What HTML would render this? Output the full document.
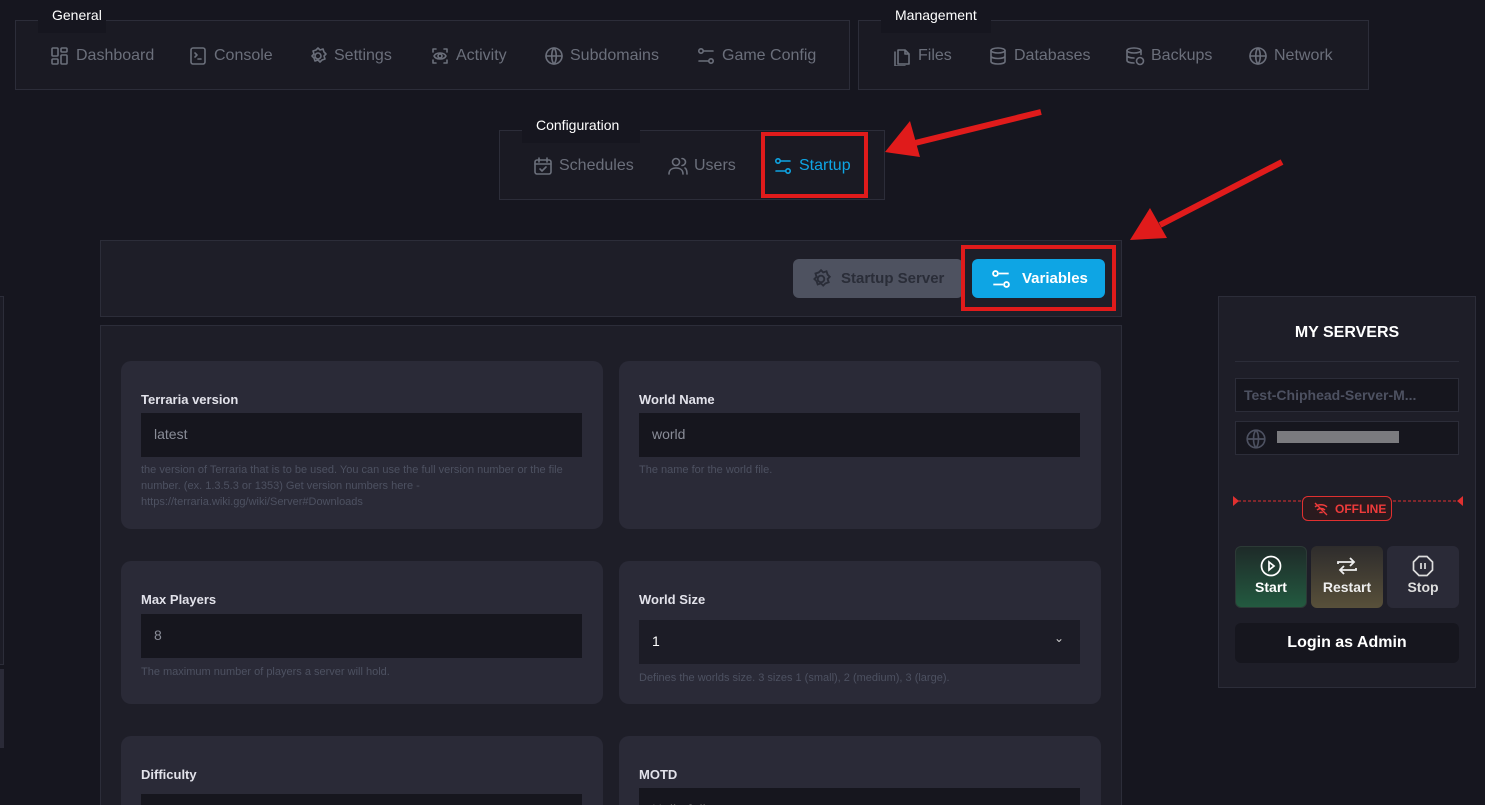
<!DOCTYPE html>
<html><head><meta charset="utf-8"><style>
*{box-sizing:border-box;margin:0;padding:0}
html,body{width:1485px;height:805px;overflow:hidden}
body{background:#16161f;font-family:"Liberation Sans",sans-serif;position:relative;color:#6b6f7b}
.a{position:absolute}
.box{position:absolute;border:1px solid #2c2d39;background:#1a1a23}
.tab{position:absolute;background:#16161f;color:#fff;font-size:14px;padding:7px 0 0 14px}
.nav{position:absolute;top:0;display:flex;align-items:center;gap:6px;font-size:16px;color:#6b6f7b}
.nav svg{width:20px;height:20px;fill:none;stroke:#6b6f7b;stroke-width:1.6;stroke-linecap:round;stroke-linejoin:round}
.panel{position:absolute;background:#1e1e28;border:1px solid #2c2d39}
.card{position:absolute;background:#2a2a37;border-radius:10px;width:482px}
.lbl{position:absolute;left:20px;font-size:13px;font-weight:bold;color:#e2e2ea}
.inp{position:absolute;left:20px;width:441px;height:44px;background:#16161e;color:#8a8d98;font-size:14px;padding:13px 13px}
.help{position:absolute;left:20px;width:450px;font-size:11px;line-height:16px;color:#4d5161}
.btn{position:absolute;border-radius:6px;font-weight:bold;font-size:16px;display:flex;align-items:center}
</style></head><body>

<div class="box" style="left:15px;top:20px;width:835px;height:70px"></div>
<div class="tab" style="left:38px;top:0;width:68px;height:33px">General</div>
<div class="a" style="left:50px;top:46px;width:800px;height:20px">
<div class="nav" style="left:0"><svg viewBox="0 0 20 20"><rect x="2" y="2" width="6" height="8" rx="1"/><rect x="11" y="2" width="6" height="4" rx="1"/><rect x="2" y="13" width="6" height="5" rx="1"/><rect x="11" y="9" width="6" height="9" rx="1"/></svg>Dashboard</div>
<div class="nav" style="left:138px"><svg viewBox="0 0 20 20"><rect x="3" y="2" width="14" height="16" rx="2"/><path d="M7 7l2 2-2 2M10 13h3"/></svg>Console</div>
<div class="nav" style="left:258px"><svg viewBox="0 0 20 20"><circle cx="10" cy="10" r="3"/><path d="M10 2l2 2 3-1 1 3 2 2-2 2 1 3-3 1-2 2-2-2-3 1-1-3-2-2 2-2-1-3 3-1z"/></svg>Settings</div>
<div class="nav" style="left:380px"><svg viewBox="0 0 20 20"><path d="M3 6V3h3M14 3h3v3M17 14v3h-3M6 17H3v-3"/><circle cx="10" cy="10" r="2"/><path d="M4 10c2-4 10-4 12 0c-2 4-10 4-12 0"/></svg>Activity</div>
<div class="nav" style="left:494px"><svg viewBox="0 0 20 20"><circle cx="10" cy="10" r="8"/><path d="M2 10h16M10 2c-3 3-3 13 0 16M10 2c3 3 3 13 0 16"/></svg>Subdomains</div>
<div class="nav" style="left:646px"><svg viewBox="0 0 20 20"><circle cx="5" cy="5" r="2.2"/><path d="M8 5h9M3 15h9"/><circle cx="15" cy="15" r="2.2"/></svg>Game Config</div>
</div>

<div class="box" style="left:858px;top:20px;width:511px;height:70px"></div>
<div class="tab" style="left:881px;top:0;width:110px;height:33px">Management</div>
<div class="a" style="left:892px;top:46px;width:470px;height:20px">
<div class="nav" style="left:0"><svg viewBox="0 0 20 20"><path d="M6 4h7l4 4v10H6z M13 4v4h4"/><path d="M3 6v14h10"/></svg>Files</div>
<div class="nav" style="left:96px"><svg viewBox="0 0 20 20"><ellipse cx="10" cy="4.5" rx="7" ry="2.5"/><path d="M3 4.5v11c0 1.5 3 2.5 7 2.5s7-1 7-2.5v-11M3 10c0 1.5 3 2.5 7 2.5s7-1 7-2.5"/></svg>Databases</div>
<div class="nav" style="left:233px"><svg viewBox="0 0 20 20"><ellipse cx="9" cy="4.5" rx="7" ry="2.5"/><path d="M2 4.5v10c0 1.5 3 2.5 7 2.5M16 4.5v4M2 9.5c0 1.5 3 2.5 7 2.5"/><circle cx="15" cy="15" r="3.5"/></svg>Backups</div>
<div class="nav" style="left:356px"><svg viewBox="0 0 20 20"><circle cx="10" cy="10" r="8"/><path d="M2 10h16M10 2c-3 3-3 13 0 16M10 2c3 3 3 13 0 16"/></svg>Network</div>
</div>

<div class="box" style="left:499px;top:130px;width:386px;height:70px"></div>
<div class="tab" style="left:522px;top:110px;width:118px;height:33px">Configuration</div>
<div class="a" style="left:533px;top:156px;width:340px;height:20px">
<div class="nav" style="left:0"><svg viewBox="0 0 20 20"><rect x="2" y="4" width="16" height="14" rx="2"/><path d="M6 2v4M14 2v4M2 8h16M7 13l2 2 4-4"/></svg>Schedules</div>
<div class="nav" style="left:135px"><svg viewBox="0 0 20 20"><circle cx="8" cy="6" r="3.5"/><path d="M1 18c0-4 3-6 7-6s7 2 7 6M14 2.5a3.5 3.5 0 010 7M17 12c1.5 1 2 3 2 6"/></svg>Users</div>
<div class="nav" style="left:240px;color:#0ea5e4"><svg viewBox="0 0 20 20" style="stroke:#0ea5e4"><circle cx="5" cy="5" r="2.2"/><path d="M8 5h9M3 15h9"/><circle cx="15" cy="15" r="2.2"/></svg>Startup</div>
</div>
<div class="a" style="left:761px;top:132px;width:107px;height:66px;border:4px solid #e01b1b"></div>

<svg class="a" style="left:0;top:0" width="1485" height="805">
<line x1="1041" y1="112" x2="915" y2="143" stroke="#e01b1b" stroke-width="6"/>
<polygon points="885,152 910,121 920,157" fill="#e01b1b"/>
<line x1="1282" y1="162" x2="1160" y2="225" stroke="#e01b1b" stroke-width="6"/>
<polygon points="1130,240 1150,208 1167,238" fill="#e01b1b"/>
</svg>

<div class="panel" style="left:100px;top:240px;width:1022px;height:77px"></div>
<div class="btn" style="left:793px;top:259px;width:170px;height:39px;background:#4e5260;color:#2a2d38;padding-left:17px;gap:9px;font-size:15px">
<svg width="22" height="22" viewBox="0 0 20 20" fill="none" stroke="#2a2d38" stroke-width="1.7"><circle cx="10" cy="10" r="3"/><path d="M10 2l2 2 3-1 1 3 2 2-2 2 1 3-3 1-2 2-2-2-3 1-1-3-2-2 2-2-1-3 3-1z"/></svg>Startup Server</div>
<div class="btn" style="left:972px;top:259px;width:133px;height:39px;background:#0ea5e4;color:#fff;padding-left:18px;gap:10px;font-size:15px">
<svg width="22" height="22" viewBox="0 0 20 20" fill="none" stroke="#fff" stroke-width="1.7"><circle cx="5" cy="5" r="2.2"/><path d="M8 5h9M3 15h9"/><circle cx="15" cy="15" r="2.2"/></svg>Variables</div>
<div class="a" style="left:961px;top:245px;width:155px;height:66px;border:4px solid #e01b1b"></div>

<div class="panel" style="left:100px;top:325px;width:1022px;height:490px;overflow:hidden">
<div class="card" style="left:20px;top:35px;height:168px">
<div class="lbl" style="top:31px">Terraria version</div>
<div class="inp" style="top:52px">latest</div>
<div class="help" style="top:101px">the version of Terraria that is to be used. You can use the full version number or the file number. (ex. 1.3.5.3 or 1353) Get version numbers here - https://terraria.wiki.gg/wiki/Server#Downloads</div>
</div>
<div class="card" style="left:518px;top:35px;height:168px">
<div class="lbl" style="top:31px">World Name</div>
<div class="inp" style="top:52px">world</div>
<div class="help" style="top:101px">The name for the world file.</div>
</div>
<div class="card" style="left:20px;top:235px;height:143px">
<div class="lbl" style="top:31px">Max Players</div>
<div class="inp" style="top:53px">8</div>
<div class="help" style="top:103px">The maximum number of players a server will hold.</div>
</div>
<div class="card" style="left:518px;top:235px;height:143px">
<div class="lbl" style="top:31px">World Size</div>
<div class="inp" style="top:59px;background:#1c1c26;color:#fff">1<span style="position:absolute;right:16px;top:11px;font-size:12px;color:#ccc">&#8964;</span></div>
<div class="help" style="top:109px">Defines the worlds size. 3 sizes 1 (small), 2 (medium), 3 (large).</div>
</div>
<div class="card" style="left:20px;top:410px;height:100px">
<div class="lbl" style="top:31px">Difficulty</div>
<div class="inp" style="top:58px"></div>
</div>
<div class="card" style="left:518px;top:410px;height:100px">
<div class="lbl" style="top:31px">MOTD</div>
<div class="inp" style="top:52px;color:#555">Hello folks</div>
</div>
</div>

<div class="a" style="left:-2px;top:296px;width:6px;height:369px;border:1px solid #2c2d39;background:#1c1c26"></div>
<div class="a" style="left:0;top:669px;width:4px;height:79px;background:#2a2a37"></div>

<div class="a" style="left:1218px;top:296px;width:258px;height:392px;border:1px solid #2c2d39;background:#1e1e28">
<div class="a" style="left:0;top:27px;width:256px;text-align:center;color:#fff;font-weight:bold;font-size:16px">MY SERVERS</div>
<div class="a" style="left:16px;top:64px;width:224px;height:1px;background:#2c2d39"></div>
<div class="a" style="left:16px;top:81px;width:224px;height:34px;background:#16161e;border:1px solid #2c2d39;color:#4d5161;font-size:14px;font-weight:bold;padding:8px 8px">Test-Chiphead-Server-M...</div>
<div class="a" style="left:16px;top:124px;width:224px;height:34px;background:#16161e;border:1px solid #2c2d39">
<svg class="a" style="left:9px;top:6px" width="22" height="22" viewBox="0 0 20 20" fill="none" stroke="#4d5161" stroke-width="1.5"><circle cx="10" cy="10" r="8"/><path d="M2 10h16M10 2c-3 3-3 13 0 16M10 2c3 3 3 13 0 16"/></svg>
<div class="a" style="left:41px;top:9px;width:122px;height:12px;background:#7b7b7f"></div></div>
<svg class="a" style="left:14px;top:199px" width="230" height="12"><polygon points="0,0 6,5 0,10" fill="#e03030"/><polygon points="230,0 224,5 230,10" fill="#e03030"/><line x1="5" y1="5" x2="225" y2="5" stroke="#e03030" stroke-dasharray="3,2"/></svg>
<div class="a" style="left:83px;top:199px;width:90px;height:25px;border:1px solid #e03030;border-radius:6px;background:#2a1a1e;color:#ef3b3b;font-size:12px;font-weight:bold;padding:5px 0 0 32px">OFFLINE
<svg class="a" style="left:10px;top:4px" width="16" height="16" viewBox="0 0 16 16" fill="none" stroke="#ef3b3b" stroke-width="1.4"><path d="M2 6c3-3 9-3 12 0M4 9c2-2 6-2 8 0M6.5 12c1-1 2-1 3 0M2 2l12 12"/></svg></div>
<div class="btn" style="left:16px;top:249px;width:72px;height:62px;background:linear-gradient(#1e2a28,#235a40);border:1px solid #2c3a36;color:#fff;font-size:14px;flex-direction:column;justify-content:center;gap:2px;padding-bottom:4px"><svg width="22" height="22" viewBox="0 0 22 22" fill="none" stroke="#fff" stroke-width="1.7"><circle cx="11" cy="11" r="9.5"/><path d="M9 7l5 4-5 4z"/></svg>Start</div>
<div class="btn" style="left:92px;top:249px;width:72px;height:62px;background:linear-gradient(#2e2c2c,#58503a);color:#eee;font-size:14px;flex-direction:column;justify-content:center;gap:2px;padding-bottom:4px"><svg width="24" height="22" viewBox="0 0 24 22" fill="none" stroke="#eee" stroke-width="1.8"><path d="M3 9V7h16M15 3l4 4-4 4M21 13v2H5M9 19l-4-4 4-4"/></svg>Restart</div>
<div class="btn" style="left:168px;top:249px;width:72px;height:62px;background:#2a2a37;color:#ddd;font-size:14px;flex-direction:column;justify-content:center;gap:2px;padding-bottom:4px"><svg width="22" height="22" viewBox="0 0 22 22" fill="none" stroke="#ddd" stroke-width="1.7"><path d="M7 1.5h8l5.5 5.5v8L15 20.5H7L1.5 15V7z"/><path d="M9 8v6M13 8v6"/></svg>Stop</div>
<div class="btn" style="left:16px;top:326px;width:224px;height:40px;background:#16161e;color:#fff;justify-content:center">Login as Admin</div>
</div>

</body></html>
